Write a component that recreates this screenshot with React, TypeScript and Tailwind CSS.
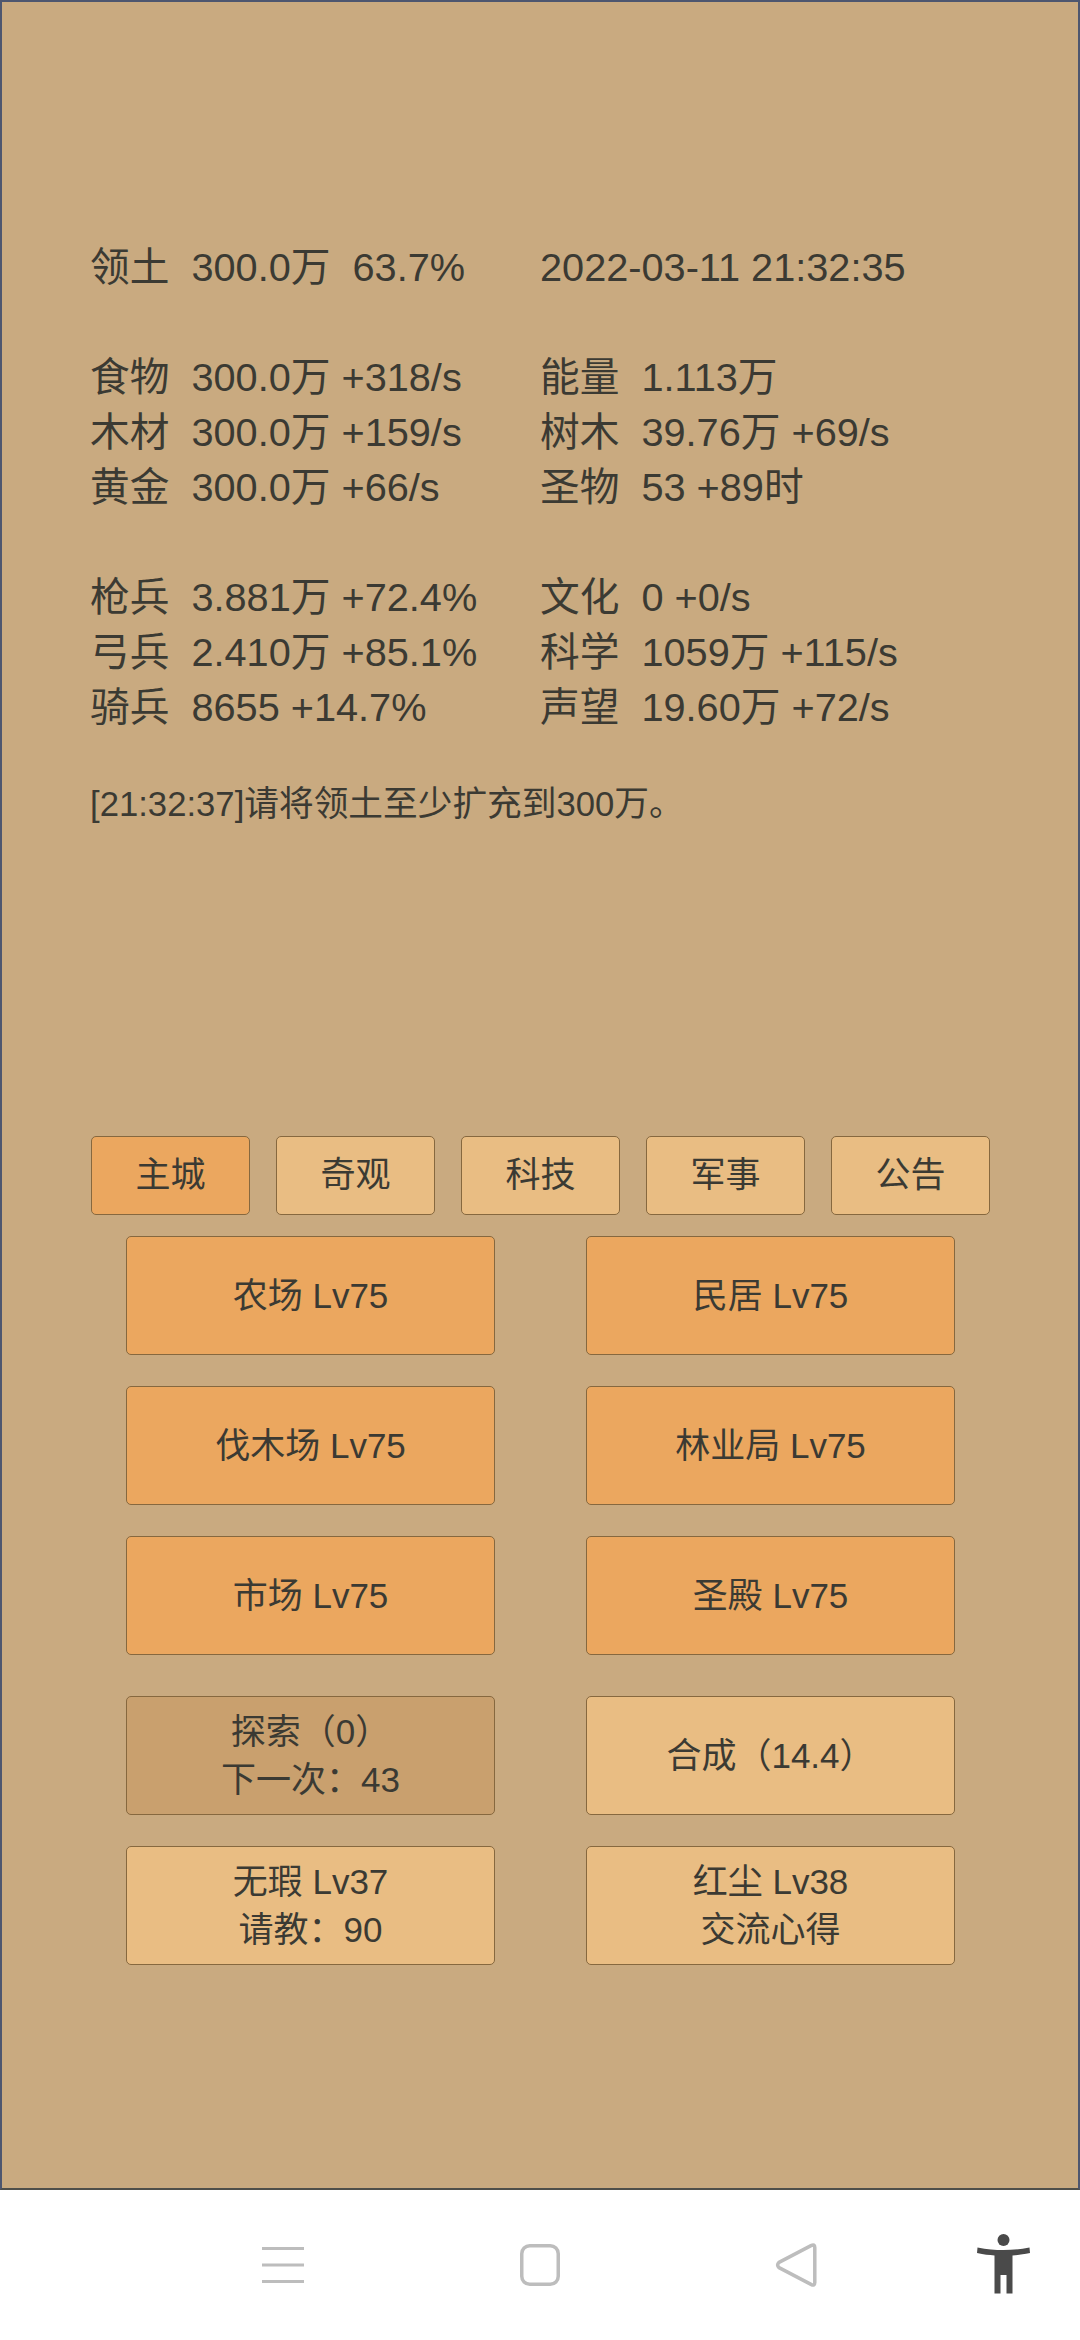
const STAT_BLOCKS = [
  [
    ["领土  300.0万  63.7%", "2022-03-11 21:32:35"],
  ],
  [
    ["食物  300.0万 +318/s", "能量  1.113万"],
    ["木材  300.0万 +159/s", "树木  39.76万 +69/s"],
    ["黄金  300.0万 +66/s", "圣物  53 +89时"],
  ],
  [
    ["枪兵  3.881万 +72.4%", "文化  0 +0/s"],
    ["弓兵  2.410万 +85.1%", "科学  1059万 +115/s"],
    ["骑兵  8655 +14.7%", "声望  19.60万 +72/s"],
  ],
];

const TABS = ["主城", "奇观", "科技", "军事", "公告"];

const BUILDINGS = [
  ["农场 Lv75", "民居 Lv75"],
  ["伐木场 Lv75", "林业局 Lv75"],
  ["市场 Lv75", "圣殿 Lv75"],
];

function ActionButton({
  lines,
  tone,
}: {
  lines: string[];
  tone: "active" | "idle" | "disabled";
}) {
  const bg =
    tone === "active"
      ? "bg-[#eba75f]"
      : tone === "idle"
        ? "bg-[#e9bd83]"
        : "bg-[#c9a06e]";
  return (
    <div
      className={`flex h-[119px] w-[369px] flex-col items-center justify-center rounded-[5px] border border-[#86683f] text-[35px] leading-[48px] ${bg}`}
    >
      {lines.map((line) => (
        <span key={line}>{line}</span>
      ))}
    </div>
  );
}

export default function App() {
  return (
    <div className="flex h-[2340px] w-[1080px] flex-col overflow-hidden bg-white font-['Liberation_Sans','Noto_Sans_CJK_SC',sans-serif] text-[#3b3a33]">
      <main className="h-[2190px] border-2 border-[#4d566f] border-b-[#4f4f4a] bg-[#c9aa80]">
        {/* Stats */}
        <div className="flex flex-col gap-[55px] pl-[88px] pt-[238px] text-[39.7px] leading-[55px]">
          {STAT_BLOCKS.map((block, i) => (
            <div key={i}>
              {block.map(([left, right]) => (
                <div key={left} className="flex whitespace-pre">
                  <span className="w-[450px]">{left}</span>
                  <span>{right}</span>
                </div>
              ))}
            </div>
          ))}
        </div>

        <p className="ml-[88px] mt-[42px] text-[34.7px] leading-[55px]">
          [21:32:37]请将领土至少扩充到300万。
        </p>

        {/* Tabs */}
        <div className="ml-[89px] mt-[304px] flex gap-[26px]">
          {TABS.map((tab, i) => (
            <div
              key={tab}
              className={`flex h-[79px] w-[159px] items-center justify-center rounded-[5px] border border-[#86683f] text-[35px] ${
                i === 0 ? "bg-[#eba75f]" : "bg-[#e9bd83]"
              }`}
            >
              {tab}
            </div>
          ))}
        </div>

        {/* Buildings */}
        <div className="ml-[124px] mt-[21px] flex flex-col gap-[31px]">
          {BUILDINGS.map(([left, right]) => (
            <div key={left} className="flex gap-[91px]">
              <ActionButton lines={[left]} tone="active" />
              <ActionButton lines={[right]} tone="active" />
            </div>
          ))}
        </div>

        <div className="ml-[124px] mt-[41px] flex flex-col gap-[31px]">
          <div className="flex gap-[91px]">
            <ActionButton lines={["探索（0）", "下一次：43"]} tone="disabled" />
            <ActionButton lines={["合成（14.4）"]} tone="idle" />
          </div>
          <div className="flex gap-[91px]">
            <ActionButton lines={["无瑕 Lv37", "请教：90"]} tone="idle" />
            <ActionButton lines={["红尘 Lv38", "交流心得"]} tone="idle" />
          </div>
        </div>
      </main>

      {/* System nav bar */}
      <nav className="flex h-[150px] items-center pl-[262px]">
        <svg width="42" height="38" viewBox="0 0 42 38" className="shrink-0">
          <path d="M0 2.5h42M0 19h42M0 35.5h42" stroke="#bdbdbd" strokeWidth="3" />
        </svg>
        <svg width="40" height="42" viewBox="0 0 40 42" className="ml-[216px] shrink-0">
          <rect x="1.75" y="1.75" width="36.5" height="38.5" rx="8" fill="none" stroke="#bdbdbd" strokeWidth="3.5" />
        </svg>
        <svg width="42" height="46" viewBox="0 0 42 46" className="ml-[215px] shrink-0">
          <path
            d="M36 3.6 Q39.8 1.6 39.8 5.5 V40.5 Q39.8 44.4 36 42.4 L4 25.6 Q1.2 23 4 20.4 Z"
            fill="none"
            stroke="#bdbdbd"
            strokeWidth="3.5"
            strokeLinejoin="round"
          />
        </svg>
        <svg width="54" height="60" viewBox="0 0 54 60" className="ml-[160px] mt-[-2px] shrink-0">
          <circle cx="26.5" cy="6" r="6" fill="#4a4a4a" />
          <path
            d="M0.5 13.5 C10 15.5 18 16 26.5 16 C35 16 43 15.5 52.5 13.5 L53 19 C46 20.5 41 21 35.5 21.5 V59.5 H29.5 V41 H23.5 V59.5 H17.5 V21.5 C12 21 7 20.5 0 19 Z"
            fill="#4a4a4a"
          />
        </svg>
      </nav>
    </div>
  );
}
